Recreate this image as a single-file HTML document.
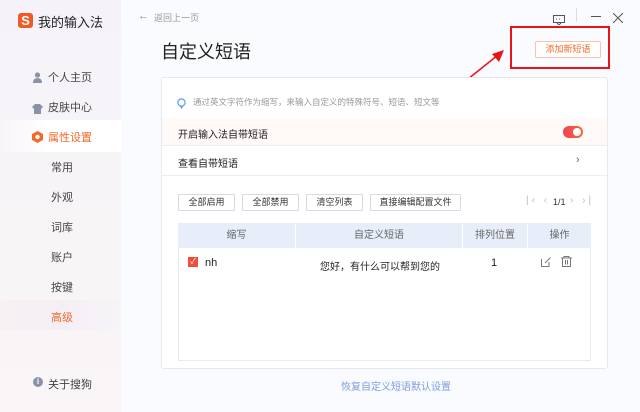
<!DOCTYPE html>
<html><head><meta charset="utf-8"><style>
*{margin:0;padding:0;box-sizing:border-box}
body{width:640px;height:412px;overflow:hidden;background:#fafbfe;font-family:"Liberation Sans","Noto Sans CJK SC",sans-serif;position:relative;color:#333}
.a{position:absolute}
#side{left:0;top:0;width:121px;height:412px;background:linear-gradient(180deg,#f5f3f9 0%,#f8f5f7 60%,#faf5f7 100%)}
.nav{font-size:11px;color:#444;white-space:nowrap}
.sub{font-size:11px;color:#444}
.btn{top:194px;height:17px;border:1px solid #d8dbe2;background:#fff;font-size:9px;color:#333;text-align:center;line-height:15px;border-radius:1px}
.th{top:223px;height:25px;background:#e8eef9;font-size:10px;color:#666;text-align:center;line-height:25px}
</style></head><body>
<div id="side" class="a"></div>
<div class="a" style="left:0;top:120px;width:121px;height:32px;background:linear-gradient(90deg,#f8f5f8,#fff 40%,#fff)"></div>
<div class="a" style="left:0;top:300px;width:121px;height:30px;background:linear-gradient(90deg,#f7f1f4,#f5eff5 50%,#f7f4f8)"></div>
<div class="a" style="left:18px;top:13px;width:15px;height:15px;background:#f15a24;border-radius:3px;color:#fff;font-size:13px;font-weight:bold;text-align:center;line-height:15px">S</div>
<div class="a" style="left:38px;top:12px;font-size:13px;color:#222">我的输入法</div>
<div class="a" style="left:33px;top:70px;width:9px;height:11px"><svg width="9" height="11"><circle cx="4.5" cy="3" r="2.6" fill="#8a93a6"/><path d="M0 11 Q0 6 4.5 6 Q9 6 9 11Z" fill="#8a93a6"/></svg></div>
<div class="a nav" style="left:48px;top:69px">个人主页</div>
<div class="a" style="left:32px;top:101px"><svg width="11" height="10"><path d="M3 0 L8 0 L11 3 L9 5 L9 10 L2 10 L2 5 L0 3Z" fill="#8a93a6"/></svg></div>
<div class="a nav" style="left:48px;top:99px">皮肤中心</div>
<div class="a" style="left:32px;top:130px"><svg width="11" height="12"><path d="M5.5 0 L11 3 L11 9 L5.5 12 L0 9 L0 3Z" fill="#f26a2a"/><circle cx="5.5" cy="6" r="2.2" fill="#fff"/></svg></div>
<div class="a nav" style="left:48px;top:129px;color:#f26a2a">属性设置</div>
<div class="a sub" style="left:51px;top:159px">常用</div>
<div class="a sub" style="left:51px;top:189px">外观</div>
<div class="a sub" style="left:51px;top:219px">词库</div>
<div class="a sub" style="left:51px;top:249px">账户</div>
<div class="a sub" style="left:51px;top:279px">按键</div>
<div class="a sub" style="left:51px;top:309px;color:#f26a2a">高级</div>
<div class="a" style="left:33px;top:377px;width:10px;height:10px;border-radius:50%;background:#8a93a6;color:#fff;font-size:8px;text-align:center;line-height:10px;font-weight:bold">i</div>
<div class="a nav" style="left:48px;top:376px">关于搜狗</div>

<div class="a" style="left:138px;top:10px;font-size:11px;color:#888">←</div>
<div class="a" style="left:154px;top:11px;font-size:9px;color:#999">返回上一页</div>
<div class="a" style="left:161px;top:38px;font-size:18px;color:#222">自定义短语</div>
<div class="a" style="left:553px;top:12px"><svg width="12" height="10"><rect x="0.5" y="0.5" width="11" height="7" fill="none" stroke="#555"/><path d="M4 8 L6 10 L8 8" fill="none" stroke="#555"/><path d="M3 4h1M6 4h1M9 4h0" stroke="#555"/></svg></div>
<div class="a" style="left:576px;top:8px;width:1px;height:14px;background:#ddd"></div>
<div class="a" style="left:591px;top:16px;width:10px;height:1px;background:#555"></div>
<div class="a" style="left:613px;top:10px"><svg width="10" height="10"><path d="M0 0L10 10M10 0L0 10" stroke="#555"/></svg></div>

<div class="a" style="left:510px;top:26px;width:100px;height:43px;border:2px solid #e8141a"></div>
<div class="a" style="left:535px;top:41px;width:66px;height:17px;border:1px solid #f7c2ae;border-radius:2px;background:#fff;font-size:9px;color:#f26a2a;text-align:center;line-height:15px">添加新短语</div>
<svg class="a" style="left:450px;top:45px" width="60" height="50"><path d="M3 46 L48 10" stroke="#e8141a" stroke-width="1.5"/><path d="M54 5 L42 9 L49 17Z" fill="#e8141a"/></svg>

<div class="a" style="left:161px;top:77px;width:447px;height:292px;background:#fff;border:1px solid #e6e9f0;border-radius:3px"></div>
<div class="a" style="left:177px;top:96px"><svg width="9" height="11"><circle cx="4.5" cy="4.5" r="3.6" fill="none" stroke="#5a9ef0" stroke-width="1.2"/><path d="M3 8.5 L4.5 11 L6 8.5" fill="#5a9ef0"/></svg></div>
<div class="a" style="left:193px;top:96px;font-size:8.5px;color:#999">通过英文字符作为缩写，来输入自定义的特殊符号、短语、短文等</div>
<div class="a" style="left:162px;top:118px;width:445px;height:28px;background:#fff9f7;border-bottom:1px solid #eee"></div>
<div class="a" style="left:178px;top:126px;font-size:10px;color:#222">开启输入法自带短语</div>
<div class="a" style="left:563px;top:126px;width:20px;height:12px;border-radius:6px;background:linear-gradient(90deg,#f2415a,#f76a2d)"></div>
<div class="a" style="left:573px;top:128px;width:8px;height:8px;border-radius:50%;background:#fff"></div>
<div class="a" style="left:162px;top:175px;width:445px;height:1px;background:#eee"></div>
<div class="a" style="left:178px;top:155px;font-size:10px;color:#222">查看自带短语</div>
<div class="a" style="left:576px;top:154px;font-size:11px;color:#666">›</div>

<div class="a btn" style="left:178px;width:57px">全部启用</div>
<div class="a btn" style="left:242px;width:57px">全部禁用</div>
<div class="a btn" style="left:306px;width:57px">清空列表</div>
<div class="a btn" style="left:370px;width:91px">直接编辑配置文件</div>
<div class="a" style="left:526px;top:195px;font-size:10px;color:#bbb;letter-spacing:3px">|‹ ‹</div>
<div class="a" style="left:553px;top:197px;font-size:9px;color:#333">1/1</div>
<div class="a" style="left:570px;top:195px;font-size:10px;color:#bbb;letter-spacing:3px">› ›|</div>

<div class="a" style="left:178px;top:223px;width:413px;height:138px;border:1px solid #e6ebf3;background:#fff"></div>
<div class="a th" style="left:178px;width:117px">缩写</div>
<div class="a th" style="left:296px;width:166px">自定义短语</div>
<div class="a th" style="left:463px;width:64px">排列位置</div>
<div class="a th" style="left:528px;width:63px">操作</div>
<div class="a" style="left:188px;top:257px;width:10px;height:10px;background:#f04d3b;color:#fff;font-size:8px;text-align:center;line-height:10px">✓</div>
<div class="a" style="left:205px;top:257px;font-size:11px;color:#222">nh</div>
<div class="a" style="left:320px;top:258px;font-size:10px;color:#222">您好，有什么可以帮到您的</div>
<div class="a" style="left:491px;top:257px;font-size:11px;color:#222">1</div>
<svg class="a" style="left:541px;top:257px" width="10" height="10"><path d="M0.5 2v7.5h7.5V5M4 6 L9.5 0.5" fill="none" stroke="#777"/></svg>
<svg class="a" style="left:561px;top:256px" width="11" height="11"><path d="M0 2h11M3 2V0.5h5V2M1.5 2v8.5h8V2M4.5 4v4.5M6.5 4v4.5" fill="none" stroke="#777"/></svg>

<div class="a" style="left:341px;top:378px;font-size:10px;color:#7c9de0">恢复自定义短语默认设置</div>
</body></html>
